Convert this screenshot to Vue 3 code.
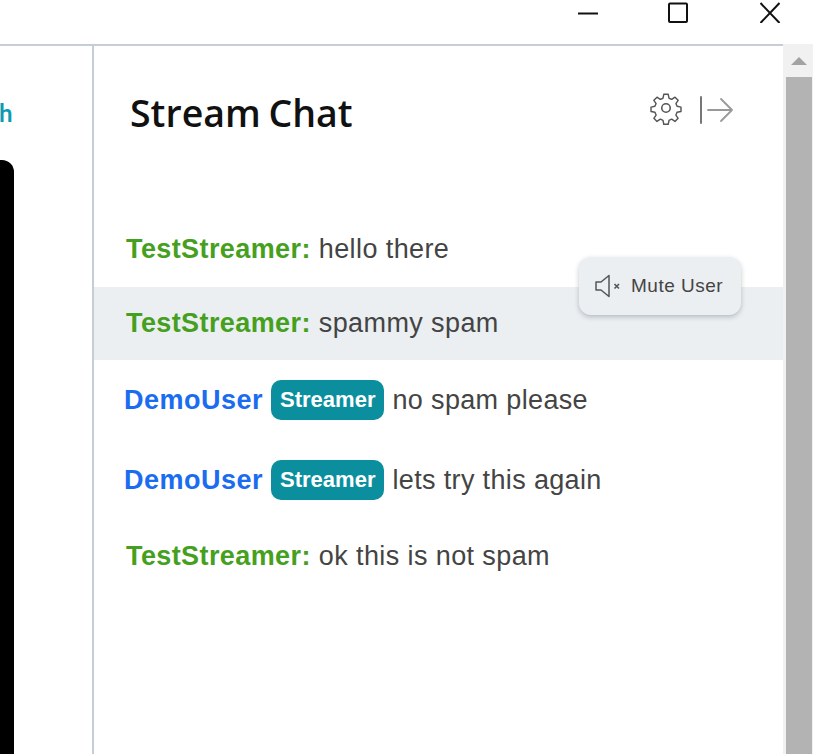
<script setup>
const messages = [
  { id: 1, user: 'TestStreamer:', text: 'hello there', streamer: false },
  { id: 2, user: 'TestStreamer:', text: 'spammy spam', streamer: false, hovered: true },
  { id: 3, user: 'DemoUser', text: 'no spam please', streamer: true },
  { id: 4, user: 'DemoUser', text: 'lets try this again', streamer: true },
  { id: 5, user: 'TestStreamer:', text: 'ok this is not spam', streamer: false }
];
</script>

<template>
  <div class="window">
    <header class="titlebar">
      <svg class="win-icon" width="20" height="22" viewBox="0 0 20 22"><path d="M0 12.500h20" /></svg>
      <svg class="win-icon" width="20" height="22" viewBox="0 0 20 22"><rect x="1" y="2.500" width="18" height="18.500" rx="1" /></svg>
      <svg class="win-icon close" width="20" height="22" viewBox="0 0 20 22"><path d="M0.500 2l19 20M19.500 2l-19 20" /></svg>
    </header>

    <div class="content">
      <div class="page">
        <aside class="left">
          <span class="left-link">h</span>
          <div class="player"></div>
        </aside>

        <section class="chat">
          <div class="chat-head">
            <h1>Stream Chat</h1>
            <div class="head-icons">
              <svg width="34" height="34" viewBox="0 0 24 24" fill="none" stroke="#555" stroke-width="1.100" stroke-linejoin="round">
                <circle cx="12" cy="12" r="3" />
                <path d="M10.300 1.500h3.400l.6 3 2.100.9 2.500-1.700 2.400 2.400-1.700 2.500.9 2.100 3 .6v3.400l-3 .6-.9 2.100 1.700 2.500-2.400 2.400-2.500-1.700-2.100.9-.6 3h-3.400l-.6-3-2.100-.9-2.500 1.700-2.400-2.400 1.700-2.500-.9-2.100-3-.6v-3.400l3-.6.9-2.100-1.700-2.500 2.400-2.400 2.500 1.700 2.100-.9z" transform="translate(12 12) scale(.92) translate(-12 -12)" />
              </svg>
              <svg class="exit-icon" width="36" height="30" viewBox="0 0 36 30" fill="none" stroke-linecap="round" stroke-linejoin="round">
                <path d="M2 2v26" stroke="#777" stroke-width="2" />
                <path d="M9 15h24M22 4l11 11-11 11" stroke="#999" stroke-width="1.800" />
              </svg>
            </div>
          </div>

          <ul class="messages">
            <li v-for="msg in messages" :key="msg.id" class="message" :class="{ hovered: msg.hovered, tall: msg.streamer }">
              <span class="user" :class="msg.streamer ? 'blue' : 'green'">{{ msg.user }}</span>
              <span v-if="msg.streamer" class="badge">Streamer</span>
              <span class="text">{{ msg.text }}</span>
              <div v-if="msg.hovered" class="mute">
                <svg width="26" height="26" viewBox="0 0 26 26" fill="none" stroke="#555" stroke-width="1.500" stroke-linejoin="round">
                  <path d="M1 9h5l8-6.500v21L6 17H1z" />
                  <path d="M19.500 11l4.500 4.500M24 11l-4.500 4.500" stroke-width="1.600" />
                </svg>
                <span>Mute User</span>
              </div>
            </li>
          </ul>
        </section>
      </div>

      <div class="scrollbar">
        <div class="arrow"></div>
        <div class="thumb"></div>
      </div>
    </div>
  </div>
</template>

<style>
html, body { margin: 0; background: #fff; overflow: hidden; }
</style>

<style scoped>
.window { width: 814px; height: 754px; display: flex; flex-direction: column; overflow: hidden; font-family: "Liberation Sans", Arial, sans-serif; }
.titlebar { height: 44px; flex: none; display: flex; justify-content: flex-end; gap: 70px; padding-right: 34px; box-sizing: border-box; }
.win-icon { margin-top: 1px; fill: none; stroke: #111; stroke-width: 2; }
.close { margin-left: 2px; }
.content { flex: 1; display: flex; min-height: 0; }
.page { width: 783px; flex: none; display: flex; border-top: 2px solid #c5ced6; }
.left { width: 92px; flex: none; border-right: 2px solid #c5ced6; overflow: hidden; }
.left-link { display: block; margin: 52px 0 0 -1px; font: 700 24px "Lato", sans-serif; color: #0e9bb0; height: 62px; }
.player { width: 14px; height: 620px; background: #000; border-radius: 0 12px 0 0; }
.chat { flex: 1; min-width: 0; }
.chat-head { height: 167px; display: flex; justify-content: space-between; align-items: flex-start; padding: 42px 48px 0 36px; box-sizing: border-box; }
h1 { margin: 0; font: 600 37.500px/50px "Open Sans", sans-serif; color: #111; word-spacing: -2px; }
.head-icons { display: flex; align-items: center; gap: 16px; margin-top: 3px; }
.exit-icon { margin-top: 4px; }
.messages { list-style: none; margin: 0; padding: 0; }
.message { height: 74px; display: flex; align-items: center; gap: 8px; padding-left: 32px; font-size: 27px; letter-spacing: 0.4px; position: relative; color: #444; }
.message.tall { height: 80px; padding-left: 30px; letter-spacing: 0.5px; }
.text { margin-top: -2px; }
.user { margin-top: -2px; }
.tall .user, .tall .text { margin-top: 0; }
.tall .text { letter-spacing: 0.35px; }
.hovered { background: #ebeff2; height: 73px; }
.hovered .user, .hovered .text { margin-top: 0; }
.green { color: #46a020; }
.blue { color: #1a6cf0; }
.user { font-weight: 700; }
.badge { background: #0b8f9f; color: #fff; font-weight: 700; font-size: 22px; letter-spacing: 0; height: 40px; line-height: 40px; padding: 0 9px; border-radius: 10px; }
.mute { position: absolute; right: 42px; top: -30px; width: 162px; height: 58px; box-sizing: border-box; display: flex; align-items: center; gap: 10px; padding-left: 16px; background: #ebeff2; border-radius: 12px; box-shadow: 0 2px 5px rgba(60, 70, 80, 0.3); font-size: 19px; letter-spacing: 0.5px; color: #444; }
.scrollbar { width: 30px; flex: none; background: #f1f1f1; padding: 0 1px 0 3px; box-sizing: border-box; }
.arrow { width: 0; height: 0; border-left: 8px solid transparent; border-right: 8px solid transparent; border-bottom: 8px solid #a3a3a3; margin: 13px auto 12px; }
.thumb { height: 700px; background: #b3b3b3; }
</style>
